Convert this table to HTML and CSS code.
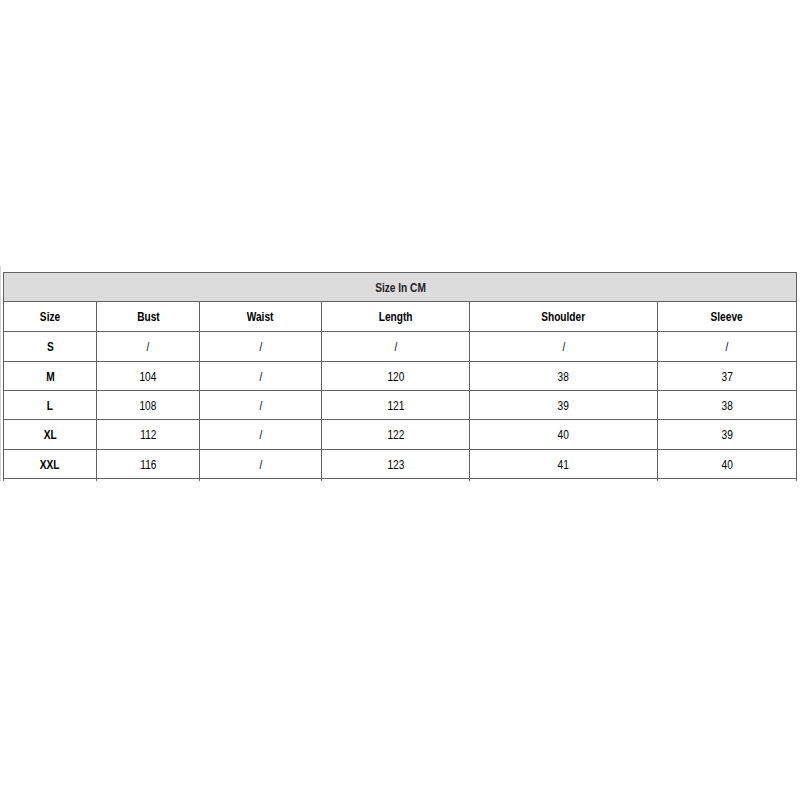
FILE: index.html
```html
<!DOCTYPE html>
<html>
<head>
<meta charset="utf-8">
<link rel="stylesheet" href="styles.css">
</head>
<body>
<div class="frame">
  <table class="size-table">
    <colgroup>
      <col class="c1"><col class="c2"><col class="c3"><col class="c4"><col class="c5"><col class="c6">
    </colgroup>
    <tr class="r-title"><td colspan="6" class="title"><span class="n">Size In CM</span></td></tr>
    <tr class="r-head"><th><span class="n">Size</span></th><th><span class="n">Bust</span></th><th><span class="n">Waist</span></th><th><span class="n">Length</span></th><th><span class="n">Shoulder</span></th><th><span class="n">Sleeve</span></th></tr>
    <tr class="r-a"><th><span class="n">S</span></th><td><span class="n">/</span></td><td><span class="n">/</span></td><td><span class="n">/</span></td><td><span class="n">/</span></td><td><span class="n">/</span></td></tr>
    <tr class="r-b"><th><span class="n">M</span></th><td><span class="n">104</span></td><td><span class="n">/</span></td><td><span class="n">120</span></td><td><span class="n">38</span></td><td><span class="n">37</span></td></tr>
    <tr class="r-b"><th><span class="n">L</span></th><td><span class="n">108</span></td><td><span class="n">/</span></td><td><span class="n">121</span></td><td><span class="n">39</span></td><td><span class="n">38</span></td></tr>
    <tr class="r-a"><th><span class="n">XL</span></th><td><span class="n">112</span></td><td><span class="n">/</span></td><td><span class="n">122</span></td><td><span class="n">40</span></td><td><span class="n">39</span></td></tr>
    <tr class="r-b"><th><span class="n">XXL</span></th><td><span class="n">116</span></td><td><span class="n">/</span></td><td><span class="n">123</span></td><td><span class="n">41</span></td><td><span class="n">40</span></td></tr>
    <tr class="r-b"><th></th><td></td><td></td><td></td><td></td><td></td></tr>
  </table>
</div>
</body>
</html>
```
FILE: styles.css
```css
html, body {
  margin: 0;
  padding: 0;
  background: #ffffff;
}
body {
  padding-top: 266px;
}
.frame {
  width: 796px;
  height: 209px;
  padding: 6px 2px 0 2px;
  border-left: 1px solid #d4d4d4;
  border-right: 1px solid #d4d4d4;
  overflow: hidden;
}
.size-table {
  border-collapse: collapse;
  table-layout: fixed;
  width: 793px;
  font-family: "Liberation Sans", Arial, sans-serif;
  font-size: 13px;
  color: #000000;
}
.n {
  display: inline-block;
  transform: scaleX(0.78);
  transform-origin: center;
  white-space: nowrap;
}
.c1 { width: 93px; }
.c2 { width: 103px; }
.c3 { width: 122px; }
.c4 { width: 148px; }
.c5 { width: 188px; }
.c6 { width: 139px; }
.size-table td, .size-table th {
  border: 1px solid #626262;
  text-align: center;
  vertical-align: middle;
  padding: 0;
  font-weight: normal;
}
.size-table th {
  font-weight: bold;
}
.size-table .title {
  background: #dcdcdc;
  height: 28px;
  font-weight: bold;
  color: #222222;
}
.r-head th {
  height: 29px;
}
.r-a td, .r-a th {
  height: 29px;
}
.r-b td, .r-b th {
  height: 28px;
}
```
